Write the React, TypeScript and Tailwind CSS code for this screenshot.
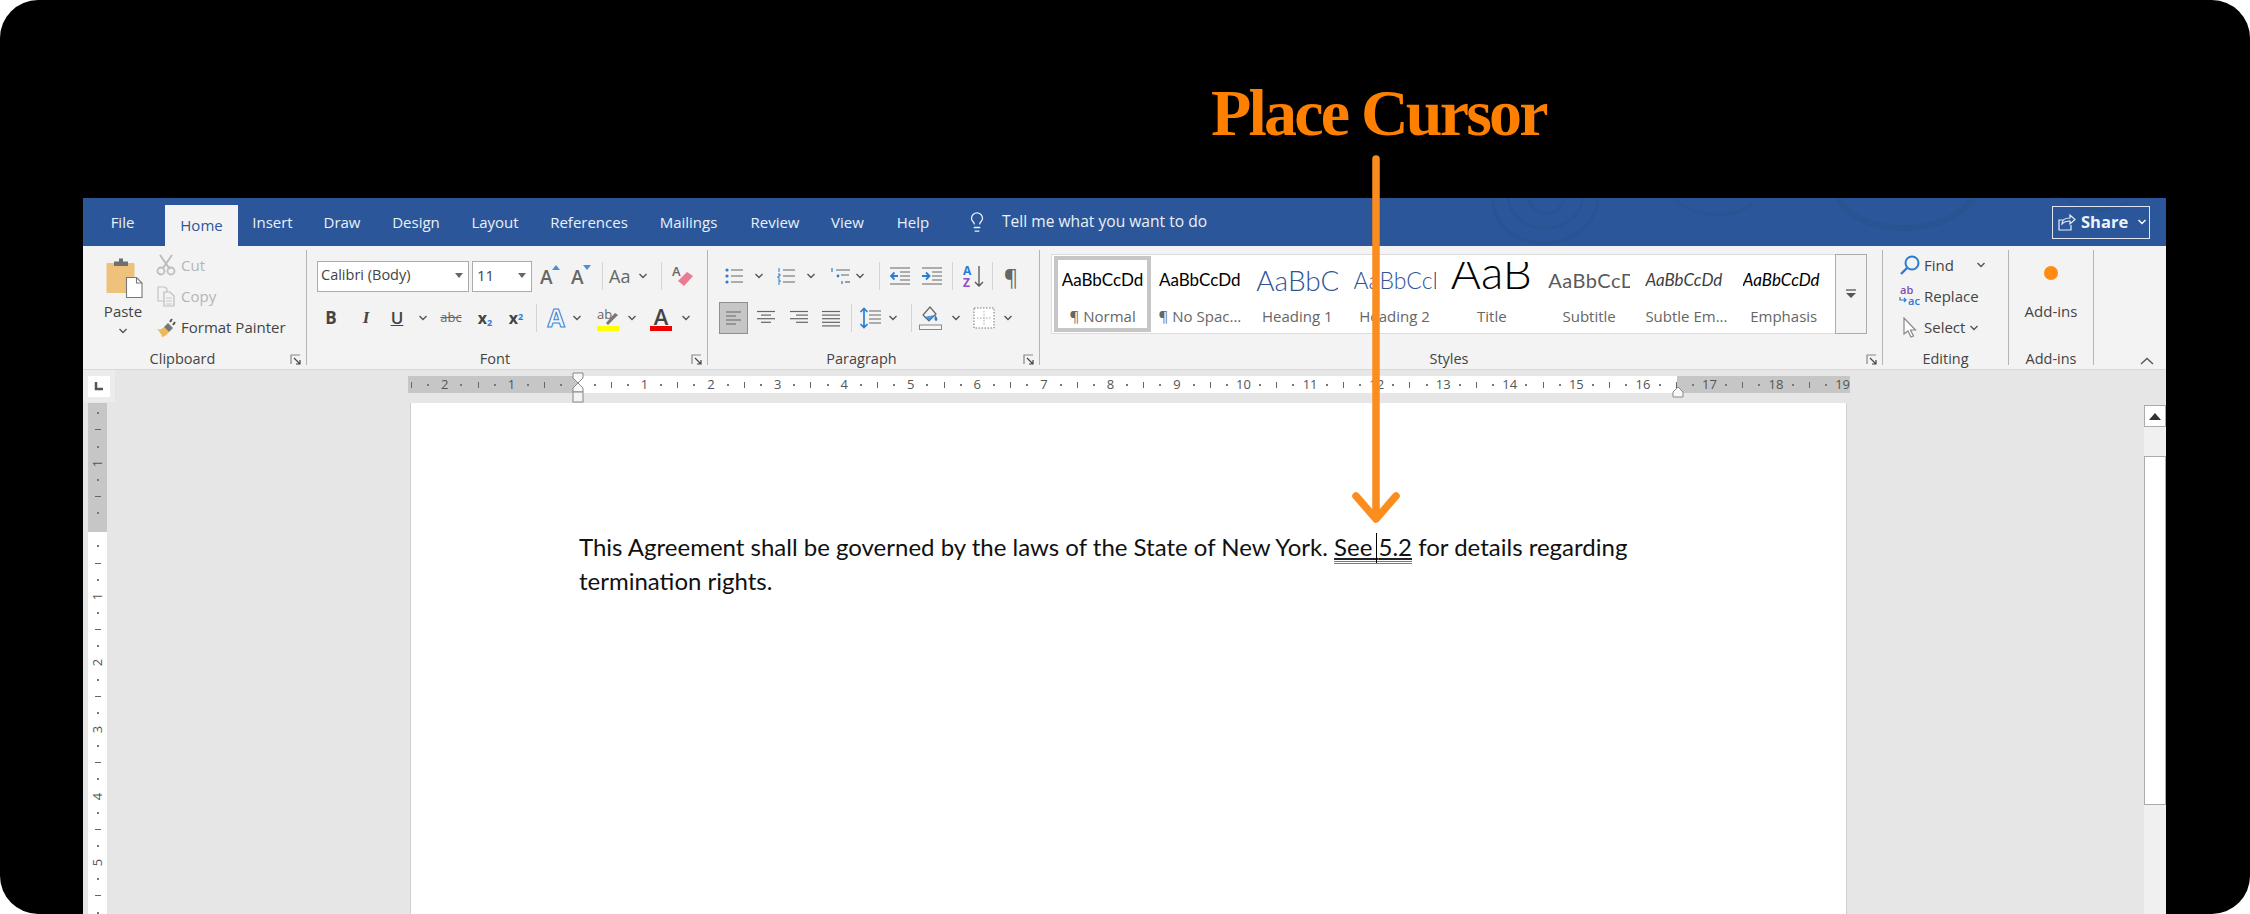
import React from 'react';
import { Lightbulb } from 'lucide-react';

const Chev = ({ className = '' }: { className?: string }) => (
  <svg width="10" height="6" viewBox="0 0 10 6" className={`shrink-0 ${className}`}>
    <path d="M1.5 1L5 4.5 8.5 1" stroke="#555" strokeWidth="1.4" fill="none" />
  </svg>
);

const Sep = ({ className = '' }: { className?: string }) => (
  <div className={`w-px h-[28px] bg-[#d4d4d4] shrink-0 ${className}`} />
);

const Launcher = () => (
  <svg width="12" height="12" viewBox="0 0 12 12" className="absolute right-[4px] -bottom-[1px]">
    <path d="M1 10V1h9" stroke="#888" strokeWidth="1.2" fill="none" />
    <path d="M4 4l6 6M10 6v4H6" stroke="#444" strokeWidth="1.2" fill="none" />
  </svg>
);

const GroupLabel = ({ children }: { children: React.ReactNode }) => (
  <div className="absolute left-0 right-0 -bottom-[3px] h-[18px] pr-[24px] flex items-center justify-center text-[14.5px] text-[#444]">
    {children}
  </div>
);

const Lines = ({ rows }: { rows: [number, number][] }) => (
  <svg width="22" height="20" viewBox="0 0 22 20" className="shrink-0">
    {rows.map(([x1, x2], i) => (
      <path key={i} d={`M${x1} ${3.5 + i * 3.6}H${x2}`} stroke="#666" strokeWidth="1.2" />
    ))}
  </svg>
);

const Bullets = () => (
  <svg width="20" height="20" viewBox="0 0 20 20" className="ml-[16px] shrink-0">
    <circle cx="3" cy="4" r="1.6" fill="#2b7cd3" />
    <circle cx="3" cy="10" r="1.6" fill="#2b7cd3" />
    <circle cx="3" cy="16" r="1.6" fill="#2b7cd3" />
    <path d="M7 4h12M7 10h12M7 16h12" stroke="#666" strokeWidth="1.2" />
  </svg>
);

const Numbering = () => (
  <svg width="20" height="20" viewBox="0 0 20 20" className="ml-[12px] shrink-0">
    <path d="M3 2v4M2 8h2v2H2v2h2M2 14h2v2H2M2 18h2" stroke="#2b7cd3" strokeWidth="1" fill="none" />
    <path d="M7 4h12M7 10h12M7 16h12" stroke="#666" strokeWidth="1.2" />
  </svg>
);

const Multilevel = () => (
  <svg width="22" height="20" viewBox="0 0 22 20" className="ml-[14px] shrink-0">
    <path d="M2 2v4" stroke="#2b7cd3" strokeWidth="1.2" />
    <path d="M6 4h14M11 9h8" stroke="#666" strokeWidth="1.2" />
    <circle cx="8" cy="10" r="1.4" fill="#2b7cd3" />
    <path d="M12 15v3" stroke="#2b7cd3" strokeWidth="1.2" />
    <path d="M15 16h5" stroke="#666" strokeWidth="1.2" />
  </svg>
);

const Indent = ({ dir }: { dir: 'in' | 'out' }) => (
  <svg width="22" height="20" viewBox="0 0 22 20" className="shrink-0">
    <path d="M1 2h20M1 18h20M11 6h10M11 10h10M11 14h10" stroke="#666" strokeWidth="1.2" />
    {dir === 'out' ? (
      <path d="M9 10H2M5.5 6.5L2 10l3.5 3.5" stroke="#2b7cd3" strokeWidth="1.8" fill="none" />
    ) : (
      <path d="M1 10h7M5 6.5L8.5 10 5 13.5" stroke="#2b7cd3" strokeWidth="1.8" fill="none" />
    )}
  </svg>
);

const LineSpacing = () => (
  <svg width="24" height="24" viewBox="0 0 24 24" className="ml-[6px] shrink-0">
    <path d="M6 2v20M2.5 6L6 2.5 9.5 6M2.5 18L6 21.5 9.5 18" stroke="#2b7cd3" strokeWidth="1.7" fill="none" />
    <path d="M11 5h12M11 9h12M11 13h12M11 17h12" stroke="#666" strokeWidth="1.2" />
  </svg>
);

const Shading = () => (
  <svg width="26" height="26" viewBox="0 0 26 26" className="ml-[6px] shrink-0">
    <path d="M12 2l-7 8 6 6 7-7z" fill="none" stroke="#666" strokeWidth="1.2" />
    <path d="M17 10c2 2 3 4 2 5.5-1 1-2.5 0-2.5-1.5z" fill="#2b7cd3" />
    <path d="M6 12l5 4 6-6z" fill="#2b7cd3" opacity="0.8" />
    <rect x="1.5" y="20" width="22" height="4.5" fill="#f7f7f7" stroke="#888" />
  </svg>
);

const Borders = () => (
  <svg width="24" height="24" viewBox="0 0 24 24" className="ml-[11px] shrink-0">
    <rect x="2" y="2" width="20" height="20" fill="#fff" stroke="#777" strokeDasharray="1.5 1.5" />
    <path d="M12 5v14M5 12h14" stroke="#aaa" strokeDasharray="1.5 1.5" />
  </svg>
);

const Clipboard = () => (
  <svg width="38" height="42" viewBox="0 0 38 42" className="ml-[4px] mt-[7px] shrink-0">
    <rect x="0.5" y="6" width="28" height="30" rx="1" fill="#eec27a" />
    <path d="M8 6V4.5h5V1.5h4V4.5h5V6v3H8z" fill="#6f6f6f" />
    <path d="M20.5 20.5h10l5.5 5.5v14.5H20.5z" fill="#fff" stroke="#777" strokeWidth="1.1" />
    <path d="M30.5 20.5V26H36" fill="none" stroke="#777" strokeWidth="1.1" />
  </svg>
);

const Scissors = () => (
  <svg width="20" height="22" viewBox="0 0 20 22" className="shrink-0">
    <circle cx="5" cy="17" r="3.5" fill="none" stroke="#bdbdbd" strokeWidth="1.8" />
    <circle cx="15" cy="17" r="3.5" fill="none" stroke="#bdbdbd" strokeWidth="1.8" />
    <path d="M4 1l9 13M16 1L7 14" stroke="#bdbdbd" strokeWidth="2" />
  </svg>
);

const CopyIcon = () => (
  <svg width="20" height="22" viewBox="0 0 20 22" className="shrink-0">
    <path d="M2 2h7l2 2v12H2z" fill="none" stroke="#c4c4c4" strokeWidth="1.2" />
    <path d="M8 7h6l4 4v10H8z" fill="#f3f3f3" stroke="#bdbdbd" strokeWidth="1.2" />
    <path d="M10 13h6M10 16h6M10 19h6" stroke="#c8c8c8" />
  </svg>
);

const Painter = () => (
  <svg width="20" height="22" viewBox="0 0 20 22" className="shrink-0">
    <path d="M1 12c3 1 5 0 7-2l5 5c-2 3-6 5-7 5 0-2-2-5-5-8z" fill="#efb65a" />
    <path d="M8 10l4-4 5 5-4 4z" fill="#777" />
    <path d="M14 5l2-3M17 8l2-3" stroke="#555" strokeWidth="2" />
  </svg>
);

const FindIcon = () => (
  <svg width="22" height="22" viewBox="0 0 22 22" className="shrink-0">
    <circle cx="13" cy="9" r="6.5" fill="none" stroke="#2b7cd3" strokeWidth="2" />
    <path d="M8 14l-6 6" stroke="#2b7cd3" strokeWidth="2.4" />
  </svg>
);

const ReplaceIcon = () => (
  <svg width="22" height="22" viewBox="0 0 22 22" className="shrink-0">
    <text x="1" y="9" fontSize="11" fill="#7f4fa8" fontWeight="600">ab</text>
    <text x="9" y="20" fontSize="11" fill="#2b7cd3" fontWeight="600">ac</text>
    <path d="M1 12v3h6M5 13l2 2-2 2" stroke="#2b7cd3" strokeWidth="1.2" fill="none" />
  </svg>
);

const SelectIcon = () => (
  <svg width="22" height="22" viewBox="0 0 22 22" className="shrink-0">
    <path d="M5 1v16l4-3 3 6 2.5-1-3-6h5z" fill="#fff" stroke="#888" strokeWidth="1.2" />
  </svg>
);

const ShareIcon = () => (
  <svg width="18" height="18" viewBox="0 0 18 18" className="shrink-0">
    <path d="M5 7H1v10h12v-5" stroke="#e8eef7" strokeWidth="1.2" fill="none" />
    <path d="M4 11c0-4 3-6 8-6V2l5 4.5-5 4.5V8c-3 0-6 1-8 3z" stroke="#e8eef7" strokeWidth="1.2" fill="none" />
  </svg>
);

const FontDrop = () => (
  <svg width="8" height="5" viewBox="0 0 8 5" className="shrink-0">
    <path d="M0 0h8L4 5z" fill="#666" />
  </svg>
);

const SizeA = ({ up }: { up: boolean }) => (
  <div className="relative w-[20px] h-[24px] shrink-0 text-[19px] leading-[26px] text-[#666] font-semibold">
    A
    <svg width="8" height="5" viewBox="0 0 8 5" className="absolute right-0 top-[1px]">
      <path d={up ? 'M0 5h8L4 0z' : 'M0 0h8L4 5z'} fill="#4a90d6" />
    </svg>
  </div>
);

const rulerMarks = Array.from({ length: 87 }, (_, i) => i - 10);
const vRulerMarks = Array.from({ length: 31 }, (_, i) => i - 7);

const HRuler = () => (
  <div className="w-[1442px] h-[17px] overflow-hidden bg-[linear-gradient(90deg,#c6c6c6_170px,#ffffff_170px,#ffffff_1269px,#c6c6c6_1269px)]">
    <div className="flex h-full items-center -ml-[4.8px] text-[13px] text-[#555]">
      {rulerMarks.map((k) => (
        <div key={k} className="w-[16.65px] shrink-0 flex justify-center items-center">
          {k === 0 ? null : k % 4 === 0 ? (
            <span className="leading-none">{Math.abs(k) / 4}</span>
          ) : k % 2 === 0 ? (
            <span className="w-px h-[6px] bg-[#666]" />
          ) : (
            <span className="w-[2px] h-[2px] bg-[#777]" />
          )}
        </div>
      ))}
    </div>
  </div>
);

const VRuler = () => (
  <div className="w-[19px] ml-[5px] shrink-0 pt-[2px] overflow-hidden text-[13px] text-[#555] bg-[linear-gradient(180deg,#c6c6c6_129px,#ffffff_129px)]">
    {vRulerMarks.map((k) => (
      <div key={k} className="h-[16.65px] flex justify-center items-center">
        {k === 0 ? null : k % 4 === 0 ? (
          <span className="-rotate-90 leading-none">{Math.abs(k) / 4}</span>
        ) : k % 2 === 0 ? (
          <span className="w-[6px] h-px bg-[#666]" />
        ) : (
          <span className="w-[2px] h-[2px] bg-[#777]" />
        )}
      </div>
    ))}
  </div>
);

const StyleCell = ({
  label,
  previewClass,
  text,
  selected,
}: {
  label: string;
  previewClass: string;
  text: string;
  selected?: boolean;
}) => (
  <div
    className={`w-[97.3px] h-[76px] shrink-0 flex flex-col items-center font-['Lato',sans-serif] ${
      selected ? 'border-[4px] border-[#c6c6c6]' : ''
    }`}
  >
    <div className={`h-[48px] w-[82px] flex items-center overflow-hidden whitespace-nowrap ${selected ? '-mt-[4px]' : ''}`}>
      <span className={previewClass}>{text}</span>
    </div>
    <div className="h-[24px] flex items-center whitespace-nowrap text-[15px] text-[#666] font-['Open_Sans',sans-serif]">{label}</div>
  </div>
);

export default function App() {
  return (
    <div className="relative w-[2250px] h-[914px] overflow-hidden bg-white">
      <div className="h-full bg-black rounded-[38px] pt-[198px] pl-[83px]">
        <div className="w-[2083px] h-[716px] flex flex-col overflow-hidden bg-[#e6e6e6] font-['Open_Sans',sans-serif]">
          {/* Title bar */}
          <div className="relative h-[48px] shrink-0 flex items-center bg-[#2b579a] text-[15px] text-[#eaf0f8] whitespace-nowrap">
            <svg width="2083" height="48" viewBox="0 0 2083 48" className="absolute left-0 top-0" fill="none" stroke="#295391" strokeWidth="3">
              <path d="M1410 0c0 60 100 60 105 0M1425 0c5 40 70 40 75 0M1445 0c5 20 35 20 35 0" />
              <path d="M1590 0c20 20 60 22 80 5" />
              <path d="M1755 0c20 40 110 40 135 0" strokeWidth="6" />
              <path d="M1985 0c10 14 40 16 60 4" strokeWidth="4" />
            </svg>
            <span className="relative w-[25px] ml-[27px] flex justify-center">File</span>
            <span className="relative w-[73px] h-[41px] ml-[30px] mt-[7px] flex justify-center items-center bg-[#f3f3f3] text-[#2b579a]">Home</span>
            <span className="relative w-[39px] ml-[15px] flex justify-center">Insert</span>
            <span className="relative w-[38px] ml-[31px] flex justify-center">Draw</span>
            <span className="relative w-[50px] ml-[30px] flex justify-center">Design</span>
            <span className="relative w-[48px] ml-[30px] flex justify-center">Layout</span>
            <span className="relative w-[78px] ml-[31px] flex justify-center">References</span>
            <span className="relative w-[61px] ml-[30px] flex justify-center">Mailings</span>
            <span className="relative w-[50px] ml-[31px] flex justify-center">Review</span>
            <span className="relative w-[35px] ml-[30px] flex justify-center">View</span>
            <span className="relative w-[34px] ml-[31px] flex justify-center">Help</span>
            <Lightbulb size={22} strokeWidth={1.4} className="relative ml-[36px]" />
            <span className="relative ml-[14px] text-[15.6px]">Tell me what you want to do</span>
            <div className="relative ml-auto mr-[16px] w-[98px] h-[33px] flex items-center border border-[#dfe6f1] pl-[5px]">
              <ShareIcon />
              <span className="ml-[5px] text-[16.5px] font-bold text-[#eef3fa]">Share</span>
              <Chev className="ml-[9px] brightness-[3]" />
            </div>
          </div>

          {/* Ribbon */}
          <div className="h-[124px] shrink-0 flex bg-[#f3f3f3] border-b border-[#d8d8d8] text-[15px] text-[#444] whitespace-nowrap">
            {/* Clipboard */}
            <div className="relative w-[224px] my-[4px] border-r border-[#b4b4b4] flex">
              <div className="ml-[19px] w-[42px] flex flex-col items-center">
                <Clipboard />
                <span className="mt-[2px] h-[20px] leading-[20px]">Paste</span>
                <Chev className="mt-[7px]" />
              </div>
              <div className="ml-[12px] flex flex-col">
                <div className="h-[30px] flex items-center text-[#b5b5b5]">
                  <Scissors />
                  <span className="ml-[5px]">Cut</span>
                </div>
                <div className="h-[32px] flex items-center text-[#b5b5b5]">
                  <CopyIcon />
                  <span className="ml-[5px]">Copy</span>
                </div>
                <div className="h-[31px] flex items-center">
                  <Painter />
                  <span className="ml-[5px]">Format Painter</span>
                </div>
              </div>
              <GroupLabel>Clipboard</GroupLabel>
              <Launcher />
            </div>

            {/* Font */}
            <div className="relative w-[401px] my-[4px] border-r border-[#b4b4b4]">
              <div className="mt-[10px] h-[32px] flex items-center">
                <div className="ml-[10px] w-[152px] h-[31px] bg-white border border-[#ababab] flex items-center justify-between pl-[3px] pr-[5px] pb-[2px] text-[14.5px]">
                  <span>Calibri (Body)</span>
                  <FontDrop />
                </div>
                <div className="ml-[3px] w-[60px] h-[31px] bg-white border border-[#ababab] flex items-center justify-between pl-[4px] pr-[5px] pb-[2px]">
                  <span>11</span>
                  <FontDrop />
                </div>
                <div className="ml-[8px]"><SizeA up /></div>
                <div className="ml-[11px]"><SizeA up={false} /></div>
                <Sep className="ml-[11px]" />
                <span className="ml-[6px] w-[28px] text-[18px] text-[#666] font-medium">Aa</span>
                <Chev className="ml-[1px]" />
                <Sep className="ml-[13px]" />
                <svg width="24" height="24" viewBox="0 0 24 24" className="ml-[9px] shrink-0">
                  <text x="1" y="12" fontSize="13" fill="#666" fontWeight="600">A</text>
                  <path d="M7 17l9-9 6 4-9 10z" fill="#ea7b95" />
                </svg>
              </div>
              <div className="mt-[10px] h-[32px] flex items-center text-[#444]">
                <span className="ml-[16px] w-[16px] text-center text-[17px] font-bold">B</span>
                <span className="ml-[19px] w-[16px] text-center text-[17px] italic font-bold font-['Liberation_Serif',serif]">I</span>
                <span className="ml-[15px] w-[16px] text-center text-[17px] font-semibold underline">U</span>
                <Chev className="ml-[13px]" />
                <span className="ml-[11px] w-[24px] text-center text-[13px] line-through text-[#666]">abc</span>
                <span className="ml-[12px] w-[20px] text-center text-[16px] font-bold">x<sub className="text-[9px] text-[#2b7cd3]">2</sub></span>
                <span className="ml-[11px] w-[20px] text-center text-[16px] font-bold">x<sup className="text-[9px] text-[#2b7cd3]">2</sup></span>
                <Sep className="ml-[10px]" />
                <svg width="24" height="26" viewBox="0 0 24 26" className="ml-[7px] shrink-0">
                  <text x="12" y="22" textAnchor="middle" fontSize="25" fontWeight="700" fill="#f3f8fd" stroke="#3f87d6" strokeWidth="1.1">A</text>
                </svg>
                <Chev className="ml-[4px]" />
                <div className="ml-[14px] w-[24px] flex flex-col items-center">
                  <svg width="24" height="20" viewBox="0 0 24 20" className="shrink-0">
                    <text x="1" y="13" fontSize="13" fill="#666">ab</text>
                    <path d="M10 17l9-10 3 2-10 10z" fill="#777" />
                  </svg>
                  <div className="w-[22px] h-[5px] bg-[#ffff00]" />
                </div>
                <Chev className="ml-[7px]" />
                <div className="ml-[12px] w-[24px] flex flex-col items-center">
                  <div className="h-[21px] text-[22px] leading-[22px] font-semibold text-[#444]">A</div>
                  <div className="w-[22px] h-[5px] bg-[#f00000]" />
                </div>
                <Chev className="ml-[8px]" />
              </div>
              <GroupLabel>Font</GroupLabel>
              <Launcher />
            </div>

            {/* Paragraph */}
            <div className="relative w-[332px] my-[4px] border-r border-[#b4b4b4]">
              <div className="mt-[10px] h-[32px] flex items-center">
                <Bullets />
                <Chev className="ml-[10px]" />
                <Numbering />
                <Chev className="ml-[10px]" />
                <Multilevel />
                <Chev className="ml-[3px]" />
                <Sep className="ml-[14px]" />
                <div className="ml-[9px]"><Indent dir="out" /></div>
                <div className="ml-[10px]"><Indent dir="in" /></div>
                <Sep className="ml-[9px]" />
                <svg width="24" height="24" viewBox="0 0 24 24" className="ml-[9px] shrink-0">
                  <text x="1" y="11" fontSize="12" fontWeight="700" fill="#2b7cd3">A</text>
                  <text x="1" y="23" fontSize="12" fontWeight="700" fill="#8e4ec6">Z</text>
                  <path d="M17 2v20M13 18l4 4 4-4" stroke="#555" strokeWidth="1.3" fill="none" />
                </svg>
                <Sep className="ml-[6px]" />
                <span className="ml-[10px] w-[16px] text-center text-[22px] text-[#666]">¶</span>
              </div>
              <div className="mt-[10px] h-[32px] flex items-center">
                <div className="ml-[11px] w-[29px] h-[32px] flex items-center justify-center bg-[#c6c6c6] border border-[#8f8f8f]">
                  <svg width="17" height="16" viewBox="0 0 17 16">
                    <path d="M1 2h15M1 6h10M1 10h15M1 14h10" stroke="#666" strokeWidth="1.2" />
                  </svg>
                </div>
                <div className="ml-[7px]"><Lines rows={[[2, 20], [6, 16], [2, 20], [6, 16]]} /></div>
                <div className="ml-[11px]"><Lines rows={[[2, 20], [8, 20], [2, 20], [8, 20]]} /></div>
                <div className="ml-[10px]"><Lines rows={[[2, 20], [2, 20], [2, 20], [2, 20], [2, 20]]} /></div>
                <Sep className="ml-[9px]" />
                <LineSpacing />
                <Chev className="ml-[6px]" />
                <Sep className="ml-[13px]" />
                <Shading />
                <Chev className="ml-[7px]" />
                <Borders />
                <Chev className="ml-[7px]" />
              </div>
              <GroupLabel>Paragraph</GroupLabel>
              <Launcher />
            </div>

            {/* Styles */}
            <div className="relative w-[843px] my-[4px] border-r border-[#b4b4b4]">
              <div className="ml-[11px] mt-[4px] w-[816px] h-[80px] flex">
                <div className="w-[784px] h-full flex pl-[2px] pt-[1px] bg-white border border-[#dcdcdc] border-r-0">
                  <StyleCell selected label="¶ Normal" text="AaBbCcDd" previewClass="text-[17px] text-black" />
                  <StyleCell label="¶ No Spac..." text="AaBbCcDd" previewClass="text-[17px] text-black" />
                  <StyleCell label="Heading 1" text="AaBbCcDd" previewClass="text-[28px] font-light text-[#2f5496]" />
                  <StyleCell label="Heading 2" text="AaBbCcDd" previewClass="text-[23px] font-light text-[#2f5496]" />
                  <StyleCell label="Title" text="AaB" previewClass="block h-[28px] -mt-[8px] overflow-hidden text-[46px] leading-[20px] font-light text-black" />
                  <StyleCell label="Subtitle" text="AaBbCcDd" previewClass="text-[20px] tracking-[0.5px] text-[#5a5a5a]" />
                  <StyleCell label="Subtle Em..." text="AaBbCcDd" previewClass="text-[17px] italic text-[#404040]" />
                  <StyleCell label="Emphasis" text="AaBbCcDd" previewClass="text-[17px] italic text-black" />
                </div>
                <div className="w-[32px] h-full flex flex-col items-center justify-center border border-[#ababab]">
                  <svg width="12" height="10" viewBox="0 0 12 10">
                    <path d="M1 1h10" stroke="#555" strokeWidth="1.3" />
                    <path d="M1 4h10L6 9z" fill="#555" />
                  </svg>
                </div>
              </div>
              <GroupLabel>Styles</GroupLabel>
              <Launcher />
            </div>

            {/* Editing */}
            <div className="relative w-[126px] my-[4px] border-r border-[#b4b4b4] pl-[16px]">
              <div className="h-[30px] flex items-center">
                <FindIcon />
                <span className="ml-[3px] w-[52px]">Find</span>
                <Chev />
              </div>
              <div className="h-[32px] flex items-center">
                <ReplaceIcon />
                <span className="ml-[3px]">Replace</span>
              </div>
              <div className="h-[31px] flex items-center">
                <SelectIcon />
                <span className="ml-[3px]">Select</span>
                <Chev className="ml-[4px]" />
              </div>
              <div className="absolute left-0 right-0 -bottom-[3px] h-[18px] flex items-center justify-center text-[14.5px]">Editing</div>
            </div>

            {/* Add-ins */}
            <div className="relative w-[85px] my-[4px] border-r border-[#b4b4b4] flex flex-col items-center">
              <div className="mt-[16px] w-[14px] h-[14px] rounded-full bg-[#ff8c12]" />
              <span className="mt-[21px] h-[20px] leading-[20px]">Add-ins</span>
              <div className="absolute left-0 right-0 -bottom-[3px] h-[18px] flex items-center justify-center text-[14.5px]">Add-ins</div>
            </div>

            <div className="flex-1 flex items-end justify-end pr-[12px] pb-[4px]">
              <svg width="14" height="8" viewBox="0 0 14 8">
                <path d="M1 7l6-5.5L13 7" stroke="#555" strokeWidth="1.3" fill="none" />
              </svg>
            </div>
          </div>

          {/* Ruler row */}
          <div className="h-[33px] shrink-0 flex">
            <div className="w-[32px] h-[32px] flex items-center justify-center bg-[#ececec]">
              <div className="w-[22px] h-[21px] bg-white flex items-center justify-center">
                <svg width="10" height="10" viewBox="0 0 10 10">
                  <path d="M2 1v7h7" stroke="#555" strokeWidth="2.5" fill="none" />
                </svg>
              </div>
            </div>
            <div className="ml-[293px] mt-[6px]">
              <HRuler />
            </div>
          </div>

          {/* Document area */}
          <div className="flex-1 min-h-0 flex">
            <VRuler />
            <div className="ml-[303px] w-[1437px] shrink-0 bg-white border-x border-[#cfcfcf] pl-[168px] pt-[127px] font-['Lato',sans-serif] text-[24px] leading-[34px] text-[#111] whitespace-nowrap">
              <div>
                This Agreement shall be governed by the laws of the State of New York.{' '}
                <span className="underline decoration-[#222] underline-offset-2 border-b-[3px] border-double border-[#4f80e0]">
                  See <span className="inline-block w-[1.5px] h-[30px] -ml-[3px] mr-[1.5px] bg-black align-[-7px]" />5.2
                </span>{' '}
                for details regarding
              </div>
              <div>termination rights.</div>
            </div>
            <div className="ml-[297px] w-[22px] shrink-0 pt-[2px] flex flex-col bg-[#e6e6e6]">
              <div className="h-[22px] shrink-0 flex items-center justify-center bg-white border border-[#ababab]">
                <svg width="12" height="7" viewBox="0 0 12 7">
                  <path d="M0 7h12L6 0z" fill="#333" />
                </svg>
              </div>
              <div className="flex-1 bg-[#f0f0f0] pt-[29px]">
                <div className="h-[349px] bg-white border border-[#ababab]" />
              </div>
            </div>
          </div>
        </div>
      </div>

      {/* Indent markers on the ruler */}
      <svg width="14" height="32" viewBox="0 0 14 32" className="absolute left-[571px] top-[372px]">
        <path d="M2 1h10v5L7 11 2 6z" fill="#f8f8f8" stroke="#888" />
        <path d="M7 11l5 5v4H2v-4z" fill="#f8f8f8" stroke="#888" />
        <rect x="2" y="20" width="10" height="10" fill="#f3f3f3" stroke="#888" />
      </svg>
      <svg width="14" height="12" viewBox="0 0 14 12" className="absolute left-[1671px] top-[386px]">
        <path d="M2 11V6l5-5 5 5v5z" fill="#f8f8f8" stroke="#888" />
      </svg>

      {/* Annotation */}
      <div className="absolute left-[1211px] top-[77px] font-['Liberation_Serif',serif] font-bold text-[66px] leading-[72px] tracking-[-2.8px] text-[#ff7f00] whitespace-nowrap">
        Place Cursor
      </div>
      <svg width="60" height="380" viewBox="0 0 60 380" className="absolute left-[1346px] top-[150px]">
        <path d="M30 9V368M10 346l20 23 20-23" stroke="#fb8c1e" strokeWidth="7.5" strokeLinecap="round" strokeLinejoin="round" fill="none" />
      </svg>
    </div>
  );
}
